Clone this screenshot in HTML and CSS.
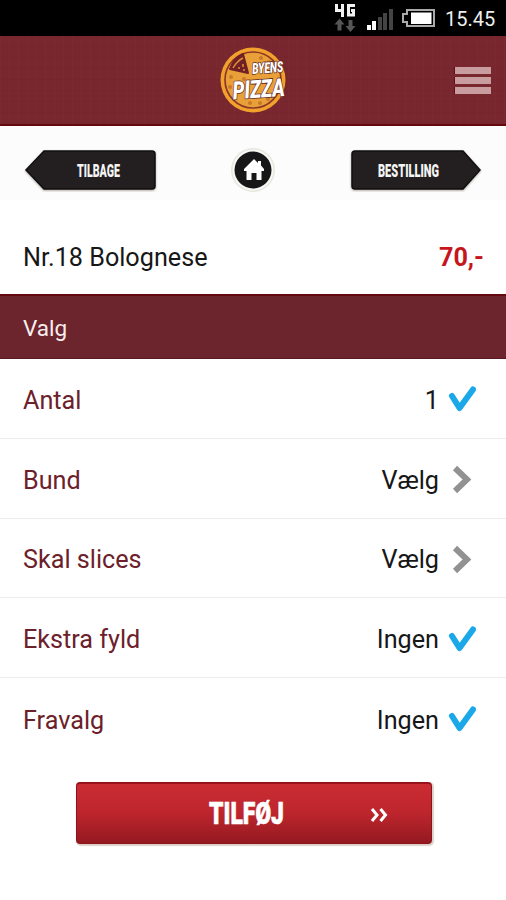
FILE: index.html
```html
<!DOCTYPE html>
<html lang="da">
<head>
<meta charset="utf-8">
<meta name="viewport" content="width=device-width, initial-scale=1">
<title>Byens Pizza</title>
<link rel="stylesheet" href="styles.css">
</head>
<body>
<div class="status">
  <svg class="status-icons" width="126" height="36" viewBox="0 0 126 36">
    <g fill="none" stroke="#f2f2f2" stroke-width="3">
      <path d="M5.500 4V10.500H12M11.500 4V17"/>
      <path d="M24 5.500H17.500V15H22.500V10.500H20"/>
    </g>
    <path fill="#555" d="M8.500 18.500l5 6h-3v6h-4v-6h-3zM19.500 32l-5-6h3v-6h4v6h3z"/>
    <path fill="#fff" d="M36 25h4v5h-4zM41 21h4v9h-4z"/>
    <path fill="#444" d="M47 17h4v13h-4zM52 13h4v17h-4zM58 9h4v21h-4z"/>
    <path fill="none" stroke="#aaa" stroke-width="2" d="M76 10h27v16H76v-4h-4v-8h4z"/>
    <rect x="80" y="12.500" width="20.500" height="11.500" fill="#fff"/>
  </svg>
  <span class="clock">15.45</span>
</div>
<header class="brand">
  <svg class="logo" width="74" height="68" viewBox="0 0 74 68">
    <circle cx="34" cy="34" r="32.500" fill="#f2a22c"/>
    <circle cx="34" cy="34" r="28" fill="#eaa039" stroke="#8d3827" stroke-width="1.700"/>
    <g fill="#c9792b">
      <circle cx="42" cy="12" r="2"/><circle cx="50" cy="16" r="2"/><circle cx="35" cy="20" r="2"/>
      <circle cx="12" cy="31" r="2"/><circle cx="11" cy="41" r="2"/><circle cx="25" cy="33" r="2"/>
      <circle cx="31" cy="57" r="2"/><circle cx="41" cy="57" r="2"/><circle cx="49" cy="53" r="2"/>
    </g>
    <path fill="#712126" stroke="#712126" stroke-width="2" stroke-linejoin="round" d="M11 23Q15 12 24 8L29 27Z"/>
    <g fill="none" stroke="#dc8e37" stroke-width="1.500"><path d="M14 22Q18 15 24 12M19 22h2M24 18v3M24 24h2"/></g>
    <g class="logo-text" transform="rotate(-4 34 36)">
      <text x="34" y="28" font-size="15" textLength="31" lengthAdjust="spacingAndGlyphs">BYENS</text>
      <text x="13" y="52" font-size="25" textLength="52" lengthAdjust="spacingAndGlyphs">PIZZA</text>
    </g>
  </svg>
  <button class="menu" aria-label="Menu"><span></span><span></span><span></span></button>
</header>
<nav class="nav">
  <a class="arrow" href="#"><svg width="136" height="44" viewBox="0 0 136 44">
    <path class="tag" d="M22 3H130Q133 3 133 6V38Q133 41 130 41H22L4 22Z"/>
    <text class="tag-text" x="55" y="28.500" textLength="43" lengthAdjust="spacingAndGlyphs">TILBAGE</text>
  </svg></a>
  <a class="home" href="#" aria-label="Hjem"><svg width="48" height="48" viewBox="0 0 48 48">
    <circle cx="24" cy="24" r="22" fill="#e8e6df"/>
    <circle cx="24" cy="24" r="20.500" fill="#f8f8f5"/>
    <circle cx="24" cy="24" r="18.500" fill="#171717"/>
    <path fill="#fff" d="M25 13L15 23V25H17.500V34H22.500V27H27.500V34H32.500V25H35V23L32 19.500V15H29V17Z"/>
  </svg></a>
  <a class="arrow" href="#"><svg width="136" height="44" viewBox="0 0 136 44">
    <path class="tag" d="M7 3H115L132 22L115 41H7Q4 41 4 38V6Q4 3 7 3Z"/>
    <text class="tag-text" x="30" y="28.500" textLength="61" lengthAdjust="spacingAndGlyphs">BESTILLING</text>
  </svg></a>
</nav>
<main>
  <div class="product"><span>Nr.18 Bolognese</span><b>70,-</b></div>
  <h2 class="section">Valg</h2>
  <ul class="options">
    <li><span class="label">Antal</span><span class="value">1</span><svg class="icon check" viewBox="0 0 32 32"><path d="M5 12L12.500 24L26 5.500"/></svg></li>
    <li><span class="label">Bund</span><span class="value">Vælg</span><svg class="icon chevron" viewBox="0 0 32 32"><path d="M8 4L20 15.500L8 27"/></svg></li>
    <li><span class="label">Skal slices</span><span class="value">Vælg</span><svg class="icon chevron" viewBox="0 0 32 32"><path d="M8 4L20 15.500L8 27"/></svg></li>
    <li><span class="label">Ekstra fyld</span><span class="value">Ingen</span><svg class="icon check" viewBox="0 0 32 32"><path d="M5 12L12.500 24L26 5.500"/></svg></li>
    <li><span class="label">Fravalg</span><span class="value">Ingen</span><svg class="icon check" viewBox="0 0 32 32"><path d="M5 12L12.500 24L26 5.500"/></svg></li>
  </ul>
  <button class="add"><svg width="354" height="60" viewBox="0 0 354 60">
    <text class="add-text" x="132" y="40" textLength="75" lengthAdjust="spacingAndGlyphs">TILFØJ</text>
    <path d="M295 25l5 6l-5 6M303.500 25l5 6l-5 6"/>
  </svg></button>
</main>
</body>
</html>
```
FILE: styles.css
```css
* { box-sizing: border-box; }
body {
  margin: 0;
  min-height: 900px;
  background: #fff;
  font-family: Roboto, "Liberation Sans", sans-serif;
  font-size: 25.200px;
  color: #171717;
}
svg { display: block; flex: none; }
button { border: 0; padding: 0; }

.status {
  height: 36px;
  padding-right: 11px;
  background: #000;
  display: flex;
  align-items: center;
  justify-content: flex-end;
}
.clock {
  width: 50px;
  padding-top: 2px;
  color: #eee;
  font-size: 20px;
}
.status-icons { margin-right: -12px; }

.brand {
  height: 90px;
  padding: 0 15px 0 219px;
  display: flex;
  align-items: center;
  justify-content: space-between;
  border-bottom: 2px solid #65080f;
  background:
    repeating-linear-gradient(90deg, rgba(255, 255, 255, .015) 0 1px, transparent 1px 9px),
    repeating-linear-gradient(0deg, rgba(50, 0, 0, .05) 0 1px, transparent 1px 11px),
    #79272e;
}
.logo-text {
  font-family: Roboto, sans-serif;
  font-weight: 900;
  font-style: italic;
  fill: #fff;
  stroke: #5b2522;
  stroke-width: 1.500px;
  paint-order: stroke;
}
.menu {
  width: 36px;
  display: flex;
  flex-direction: column;
  gap: 3px;
  background: none;
}
.menu span { height: 7px; background: #c99da0; box-shadow: -1px 0 #5a1119; }

.nav {
  height: 74px;
  padding: 16px 22px 0;
  background: #fcfcfc;
  display: flex;
  align-items: flex-start;
  justify-content: space-between;
}
.nav .arrow { padding-top: 6px; }
.nav .home { padding-top: 4px; }
.tag {
  fill: #231f20;
  stroke: #100e0f;
  stroke-width: 1.500px;
  filter: drop-shadow(0 1px 1px #aaa69c);
}
.tag-text {
  font-size: 18px;
  font-weight: 900;
  fill: #f4f4f4;
}

.product {
  height: 94px;
  padding: 20px 22px 0 23px;
  display: flex;
  align-items: center;
  justify-content: space-between;
}
.product b { color: #c6161d; font-weight: 700; }
.section {
  height: 65px;
  margin: 0;
  padding: 1px 23px 0;
  display: flex;
  align-items: center;
  background: #6c242d;
  border-top: 2px solid #650911;
  border-bottom: 1px solid #591820;
  color: #f8eeee;
  font-size: 22.500px;
  font-weight: 400;
}
.options { margin: 0; padding: 0; list-style: none; }
.options li {
  height: 79.800px;
  padding: 4px 27px 0 23px;
  display: flex;
  align-items: center;
  border-bottom: 1px solid #ececec;
}
.options li:last-child { border-bottom: 0; }
.label { flex: 1; color: #6c202a; }
.icon { width: 32px; height: 32px; margin-left: 8px; fill: none; stroke-linecap: round; }
.check { stroke: #1ba8e8; stroke-width: 6px; stroke-linejoin: round; }
.chevron { stroke: #929292; stroke-width: 6px; stroke-linecap: butt; }

.add {
  width: 356px;
  height: 62px;
  margin: 24px 0 0 76px;
  display: block;
  border: 1px solid #8f1219;
  border-top: 2px solid #97131b;
  border-radius: 4px;
  background: linear-gradient(#cb2c33, #bd252d 50%, #941920);
  box-shadow: 1px 1px 1px 1px #dcd2ca;
}
.add path { fill: none; stroke: #fff; stroke-width: 3px; }
.add-text {
  font-family: Roboto, sans-serif;
  font-size: 32px;
  font-weight: 900;
  fill: #fff;
  stroke: #fff;
  stroke-width: 0.600px;
}
```
